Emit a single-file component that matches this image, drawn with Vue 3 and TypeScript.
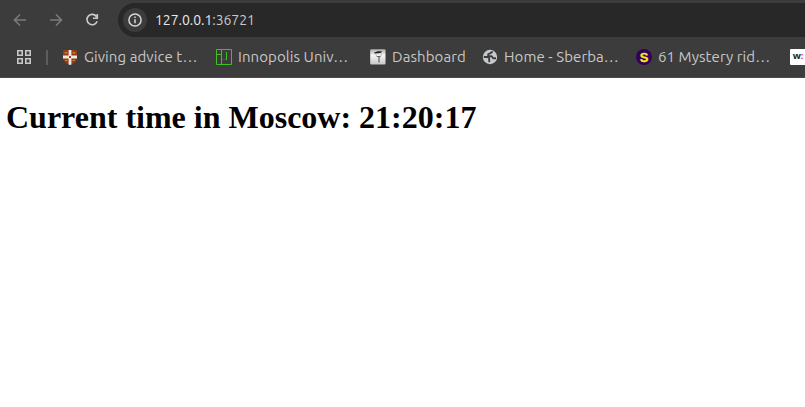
<script setup lang="ts">
interface Bookmark {
  icon: string
  label: string
}

const bookmarks: Bookmark[] = [
  { icon: 'shield', label: 'Giving advice t…' },
  { icon: 'iu', label: 'Innopolis Univ…' },
  { icon: 'tree', label: 'Dashboard' },
  { icon: 'globe', label: 'Home - Sberba…' },
  { icon: 'mystery', label: '61 Mystery rid…' },
  { icon: 'wiki', label: '' },
]
const time = '21:20:17'
</script>

<template>
  <div class="browser">
    <header class="chrome">
      <div class="toolbar">
        <nav class="nav">
          <svg class="dim" viewBox="0 0 16 16"><path d="M14 8H3M8 2.5 2.5 8 8 13.5" /></svg>
          <svg class="dim" viewBox="0 0 16 16"><path d="M2 8h11M8 2.5 13.5 8 8 13.5" /></svg>
          <svg class="reload" viewBox="0 0 16 16"><path d="M12.600 4.800A5.200 5.200 0 1 0 13.100 9.200M13.300 2v4.300H9" /></svg>
        </nav>
        <div class="address">
          <span class="info">
            <svg viewBox="0 0 16 16"><circle cx="8" cy="8" r="6.1" /><path d="M8 7.2v4M8 4.5v1.6" /></svg>
          </span>
          <span class="url"><b>127.0.0.1</b>:36721</span>
        </div>
      </div>
      <div class="bookmarks">
        <svg class="apps" viewBox="0 0 14 14">
          <path d="M.8.8h4.400v4.400H.8zM8.800.8h4.400v4.400H8.800zM.8 8.800h4.400v4.400H.8zM8.800 8.800h4.400v4.400H8.800z" />
        </svg>
        <span class="divider"></span>
        <div v-for="item in bookmarks" :key="item.icon" class="bookmark" :class="item.icon">
          <svg v-if="item.icon === 'shield'" viewBox="0 0 16 16">
            <path d="M1 1.500 4 .7l4 .6 4-.6 3 .8v7.500c0 3.500-3.300 5.400-7 7-3.700-1.600-7-3.500-7-7z" fill="#963a18" />
            <path d="M2.500 3h3v1.500h-3zM10.500 3h3v1.500h-3zM3 11h2.500v1H3zM10.500 11H13v1h-2.500z" fill="#b6842c" />
            <path d="M6.600 1h2.800v5.600H15v2.800H9.400v6L8 16l-1.400-.6v-6H1V6.600h5.600z" fill="#eee9e5" />
            <path d="M7 7h2v2H7z" fill="#b33525" />
          </svg>
          <svg v-else-if="item.icon === 'iu'" viewBox="0 0 16 16">
            <path d="M.5.5h15v15H.5zM1 5.500h4.500M5.500 1v14.500M10.500 3v8" fill="none" stroke="#3fc11f" />
            <path d="M5.500 10.500h5" fill="none" stroke="#3fc11f" stroke-opacity=".25" />
          </svg>
          <svg v-else-if="item.icon === 'tree'" viewBox="0 0 16 16">
            <defs>
              <linearGradient id="paper" x2="0" y2="1"><stop stop-color="#aaa" /><stop offset=".4" stop-color="#f5f5f5" /><stop offset="1" stop-color="#c8c8c8" /></linearGradient>
            </defs>
            <rect x=".2" y=".2" width="15.300" height="15.300" rx="1" fill="url(#paper)" />
            <path d="M4 3.800C6 2.200 9 1.800 12.300 2.500L10.500 4l-2 .3-4 .2z" fill="#222" />
            <path d="m5.500 5 1.500 2.500 3.500.5 1-3.500" fill="none" stroke="#bbb" />
            <path d="M6.800 7.500h3.500M9 8v5.500" fill="none" stroke="#666" stroke-width="1.200" />
          </svg>
          <svg v-else-if="item.icon === 'globe'" viewBox="0 0 16 16">
            <circle cx="8" cy="8" r="7.200" fill="#c5c8cc" />
            <path d="M10.800 3C8.500 3 9.200 4.300 7.500 4.600 5.300 5 5.800 7.200 7.500 7.200h1.800c1.500 0 .8 2 2.200 2H14M1.800 8h3c1.600 0 2.500.8 2.400 2 0 1.500-.4 2 .5 3" fill="none" stroke="#3c3c3c" stroke-width="1.900" />
          </svg>
          <svg v-else-if="item.icon === 'mystery'" viewBox="0 0 16 16">
            <circle cx="8" cy="8" r="8" fill="#32005b" />
            <text x="8" y="12.500" text-anchor="middle">S</text>
          </svg>
          <svg v-else viewBox="0 0 16 16">
            <rect width="20" height="16" rx="1" fill="#fff" />
            <text x="2.700" y="10.400">w<tspan fill="#e22">:</tspan></text>
          </svg>
          <span v-if="item.label" class="label">{{ item.label }}</span>
        </div>
      </div>
    </header>
    <main>
      <h1>Current time in Moscow: {{ time }}</h1>
    </main>
  </div>
</template>

<style>
body {
  margin: 0;
  background: #fff;
  overflow: hidden;
}
</style>

<style scoped>
.browser {
  height: 407px;
  overflow: hidden;
}
.chrome {
  box-sizing: border-box;
  height: 78px;
  padding-top: 3px;
  background: #3c3c3c;
  border-bottom: 1px solid #4b4b4b;
  font-family: Ubuntu, "Noto Sans", sans-serif;
  overflow: hidden;
}
.toolbar {
  display: flex;
  height: 34px;
}
.nav {
  display: flex;
  align-items: center;
  gap: 20px;
  padding-left: 12px;
  width: 106px;
}
.nav svg {
  flex: none;
  width: 16px;
  height: 16px;
  fill: none;
  stroke-width: 1.6;
}
.dim {
  stroke: #7b7b7b;
}
.reload {
  stroke: #cacaca;
}
.address {
  flex: 1;
  display: flex;
  align-items: center;
  padding-left: 5px;
  background: #282828;
  border-radius: 17px 0 0 17px;
}
.info {
  display: grid;
  place-items: center;
  width: 24px;
  height: 24px;
  border-radius: 12px;
  background: #3c3c3c;
}
.info svg {
  width: 16px;
  height: 16px;
  fill: none;
  stroke: #d8d8d8;
  stroke-width: 1.5;
}
.url {
  margin-left: 8px;
  color: #c7c7c7;
  font-size: 14px;
  line-height: 20px;
  letter-spacing: -0.05px;
  white-space: nowrap;
}
.url b {
  color: #e8e8e8;
  font-weight: 400;
}
.bookmarks {
  display: flex;
  align-items: center;
  height: 40px;
  padding-left: 17px;
}
.apps {
  flex: none;
  width: 14px;
  height: 14px;
  fill: none;
  stroke: #c7c7c7;
  stroke-width: 1.6;
}
.divider {
  flex: none;
  width: 2px;
  height: 15px;
  margin: 0 14px 0 15px;
  background: #5d5d5d;
}
.bookmark {
  flex: none;
  display: flex;
  align-items: center;
  gap: 6px;
  width: 154px;
}
.bookmark.tree {
  width: 112px;
}
.bookmark svg {
  flex: none;
  width: 16px;
  height: 16px;
  overflow: visible;
}
.label {
  color: #c7c7c7;
  font-size: 15px;
  line-height: 20px;
  letter-spacing: 0.08px;
  white-space: nowrap;
}
.mystery text {
  fill: #ffe818;
  font: bold 13px "Liberation Sans", sans-serif;
  stroke: #ffe818;
  stroke-width: 0.3;
}
.wiki text {
  fill: #222;
  font: bold 9.5px "Noto Sans", sans-serif;
}
h1 {
  margin: 21px 0 0 6px;
  color: #000;
  font: bold 32px/37px "Liberation Serif", serif;
  white-space: nowrap;
}
</style>
